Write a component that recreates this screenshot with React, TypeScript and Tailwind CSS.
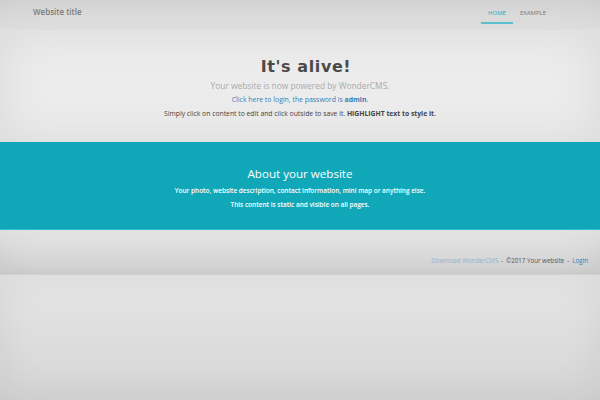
export default function App() {
  return (
    <div
      className="min-h-[400px] w-full bg-[#e4e4e4] shadow-[inset_0_0_60px_rgba(0,0,0,0.12)] text-[#555]"
      style={{ fontFamily: '"Open Sans", "DejaVu Sans", sans-serif' }}
    >
      {/* Header */}
      <header className="h-[30px] flex items-start justify-between pl-[33px] pr-[47px] bg-gradient-to-b from-[#d9d9d9] to-[#e6e6e6] shadow-[inset_0_0_40px_rgba(0,0,0,0.06)]">
        <div className="pt-[5px] text-[8px] leading-[14px] font-semibold text-[#7a7a7a]">Website title</div>
        <nav className="flex text-[6px] leading-[10px] uppercase">
          <a className="px-[7px] pt-[8px] pb-[4px] border-b-2 border-[#5bbfcc] text-[#2aa9c0]">Home</a>
          <a className="px-[7px] pt-[8px] pb-[4px] text-[#777]">Example</a>
        </nav>
      </header>

      {/* Intro */}
      <section className="h-[112px] flex flex-col items-center bg-[#ececec] shadow-[inset_0_0_50px_rgba(0,0,0,0.08)]">
        <h1 className="mt-[27px] pl-[12px] font-['DejaVu_Sans',sans-serif] text-[16px] leading-[20px] tracking-[0.6px] font-bold text-[#4a4a4a]">
          It's alive!
        </h1>
        <p className="mt-[3px] text-[8.4px] leading-[12px] text-[#aaa]">Your website is now powered by WonderCMS.</p>
        <p className="mt-[2px] text-[6.9px] leading-[12px] text-[#3b7db3]">
          Click here to login, the password is <b>admin</b>.
        </p>
        <p className="mt-[2px] text-[6.8px] leading-[12px] text-[#444]">
          Simply click on content to edit and click outside to save it. <b>HIGHLIGHT text to style it.</b>
        </p>
      </section>

      {/* About */}
      <section className="h-[88px] flex flex-col items-center bg-[#10a8b9] border-b border-[#2cc0cd] text-white">
        <h2 className="mt-[23px] text-[11.6px] leading-[18px]">About your website</h2>
        <p className="mt-[2px] text-[6.45px] leading-[12px] font-semibold">
          Your photo, website description, contact information, mini map or anything else.
        </p>
        <p className="mt-[2px] text-[6.45px] leading-[12px] font-semibold">This content is static and visible on all pages.</p>
      </section>

      {/* Footer */}
      <footer className="h-[45px] flex items-end justify-end pr-[12px] pb-[8px] bg-gradient-to-b from-[#ececec] to-[#d4d4d4] shadow-[inset_0_0_40px_rgba(0,0,0,0.08)] text-[6.2px] leading-[10px] border-b border-[#d0d0d0]">
        <a className="text-[#8fb4d0]">Download WonderCMS</a>
        <span className="text-[#555] px-[3px]">-</span>
        <span className="text-[#555]">©2017 Your website</span>
        <span className="text-[#555] px-[3px]">-</span>
        <a className="text-[#2f7ab8]">Login</a>
      </footer>

      <div className="h-[125px] bg-gradient-to-b from-[#e6e6e6] to-[#d5d5d5] shadow-[inset_0_0_40px_rgba(0,0,0,0.06)]" />
    </div>
  );
}
